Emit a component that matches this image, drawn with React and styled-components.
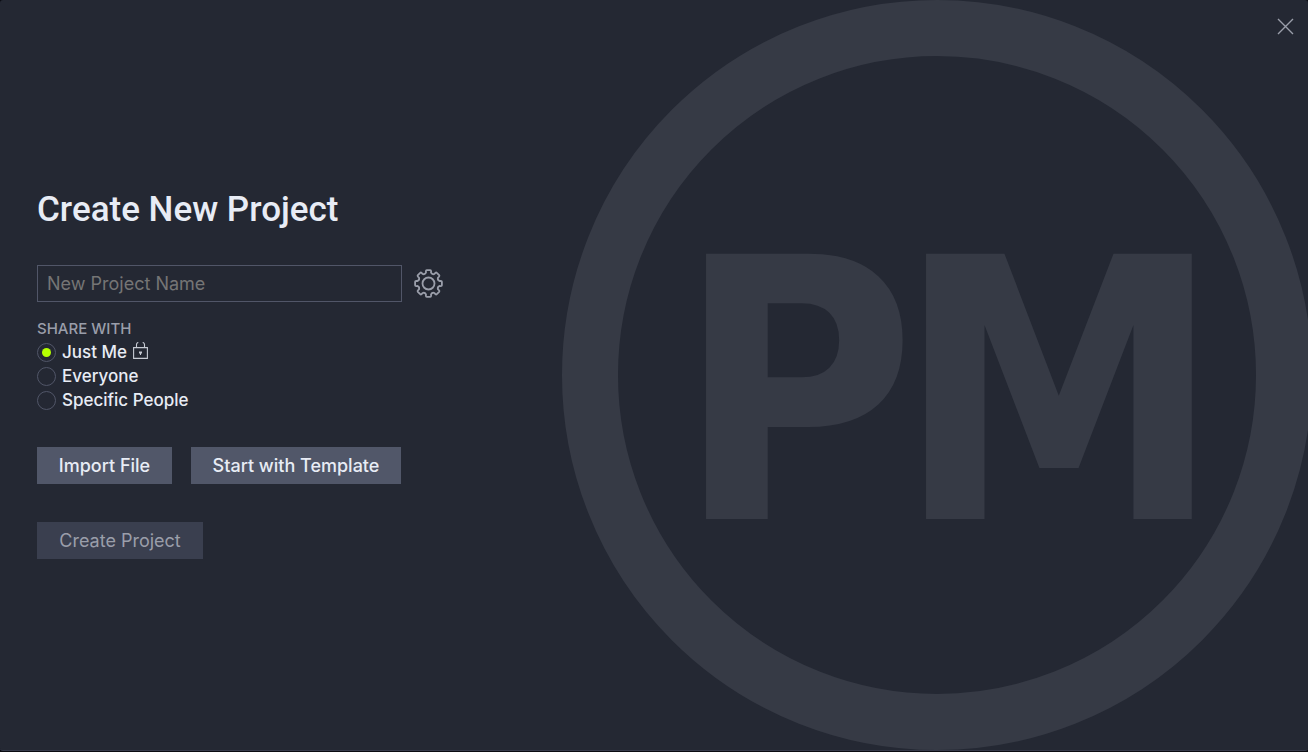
import React, { useState } from "react";
import styled, { createGlobalStyle } from "styled-components";

const GlobalStyle = createGlobalStyle`
  *, *::before, *::after { box-sizing: border-box; }
  body {
    margin: 0;
    background: #0b0c12;
    font-family: Inter, "Liberation Sans", sans-serif;
    color: #e8ecf5;
  }
  button, input { font: inherit; color: inherit; }
`;

const Dialog = styled.main`
  position: relative;
  display: flex;
  align-items: center;
  min-height: calc(100vh - 1px);
  padding: 36px;
  padding-left: 37px;
  overflow: hidden;
  background: #242833;
  border-bottom: 1px solid #363b4b;
  border-radius: 3px;
`;

const Emblem = styled.svg`
  position: absolute;
  top: 0;
  right: -4px;
  height: 100%;
  fill: #363a45;
  font-family: "DejaVu Sans Condensed", "DejaVu Sans", sans-serif;
  font-size: 364px;
  font-weight: 700;
`;

const IconButton = styled.button`
  display: flex;
  padding: 0;
  border: 0;
  background: none;
  color: #9a9eaa;
  cursor: pointer;
`;

const CloseButton = styled(IconButton)`
  position: absolute;
  top: 18px;
  right: 14px;
`;

const Form = styled.form`
  position: relative;
  display: flex;
  flex-direction: column;
`;

const Title = styled.h1`
  margin: 0 0 37px;
  font-family: Roboto, sans-serif;
  font-size: 35px;
  font-weight: 500;
  line-height: 37px;
`;

const NameRow = styled.div`
  display: flex;
  align-items: center;
  gap: 12px;
`;

const NameInput = styled.input`
  width: 365px;
  height: 37px;
  padding: 0 9px;
  border: 1px solid #515668;
  border-radius: 0;
  background: transparent;
  font-size: 18px;
  outline: none;
  &::placeholder { color: #757575; opacity: 1; }
`;

const ShareGroup = styled.fieldset`
  display: flex;
  flex-direction: column;
  margin: 17px 0 35px;
  padding: 0;
  border: 0;
`;

const ShareLegend = styled.legend`
  margin-bottom: 1px;
  padding: 0;
  color: #9a9eaa;
  font-size: 15px;
  font-weight: 500;
  line-height: 20px;
`;

const Option = styled.label`
  display: flex;
  align-items: center;
  gap: 6px;
  height: 24px;
  font-size: 17px;
  font-weight: 500;
  line-height: 24px;
`;

const Radio = styled.input`
  appearance: none;
  display: grid;
  place-items: center;
  width: 19px;
  height: 19px;
  margin: 0;
  border: 1px solid #515668;
  border-radius: 50%;
  &:checked::before {
    content: "";
    width: 9px;
    height: 9px;
    border-radius: 50%;
    background: #b4ff00;
  }
`;

const ButtonRow = styled.div`
  display: flex;
  gap: 19px;
  margin-bottom: 38px;
`;

const Button = styled.button`
  width: ${(p) => p.$width}px;
  height: 37px;
  padding: 0;
  border: 0;
  background: #515769;
  font-size: 18px;
  font-weight: 500;
  line-height: 24px;
  &:disabled {
    background: #3a3f4f;
    color: #9a9eaa;
    font-weight: 400;
  }
`;

const gearPath = () => {
  const at = (r, deg) => {
    const a = (deg * Math.PI) / 180;
    return `${(14.5 + r * Math.sin(a)).toFixed(2)} ${(14.5 - r * Math.cos(a)).toFixed(2)}`;
  };
  let d = "";
  for (let i = 0; i < 8; i++) {
    const c = i * 45;
    d += `${i ? "L" : "M"}${at(11.2, c - 13)}L${at(12.6, c - 12)}Q${at(13.6, c - 11)} ${at(13.5, c - 7)}`;
    d += `L${at(13.5, c + 7)}Q${at(13.6, c + 11)} ${at(12.6, c + 12)}L${at(11.2, c + 13)}`;
    d += `Q${at(9.4, c + 22.5)} ${at(11.2, c + 32)}`;
  }
  return d + "Z";
};

const GearIcon = () => (
  <svg width="29" height="29" viewBox="0 0 29 29" fill="none" stroke="currentColor" strokeWidth="1.8" strokeLinejoin="round" aria-hidden="true">
    <path d={gearPath()} />
    <circle cx="14.5" cy="14.5" r="6" />
  </svg>
);

const LockIcon = () => (
  <svg width="15" height="20" viewBox="0 0 15 20" fill="none" stroke="#c6cad3" strokeWidth="1.1" aria-hidden="true">
    <path d="M.6 5.6h13.8v10.8H.6zM3.5 5.5V2.4q0-1.6 1.8-2M11.5 5.5V2.4q0-1.6-1.8-2" />
    <path d="M6 9.5h3v1.4l-1 1V13H7v-1.1l-1-1z" fill="#c6cad3" stroke="none" />
  </svg>
);

const CloseIcon = () => (
  <svg width="17" height="17" viewBox="0 0 17 17" stroke="currentColor" strokeWidth="1.4" aria-hidden="true">
    <path d="M1 1l15 15M16 1L1 16" />
  </svg>
);

const options = [
  { id: "me", label: "Just Me", locked: true },
  { id: "everyone", label: "Everyone" },
  { id: "specific", label: "Specific People" },
];

export default function App() {
  const [share, setShare] = useState("me");
  const [name, setName] = useState("");
  return (
    <>
      <GlobalStyle />
      <Dialog>
        <Emblem viewBox="0 0 750 750" aria-hidden="true">
          <circle cx="375" cy="375" r="347" fill="none" stroke="#363a45" strokeWidth="56" />
          <text x="114 334" y="519">PM</text>
        </Emblem>
        <Form onSubmit={(e) => e.preventDefault()}>
          <Title>Create New Project</Title>
          <NameRow>
            <NameInput
              aria-label="New Project Name"
              placeholder="New Project Name"
              value={name}
              onChange={(e) => setName(e.target.value)}
            />
            <IconButton type="button" aria-label="Project settings"><GearIcon /></IconButton>
          </NameRow>
          <ShareGroup>
            <ShareLegend>SHARE WITH</ShareLegend>
            {options.map((o) => (
              <Option key={o.id}>
                <Radio type="radio" name="share" checked={share === o.id} onChange={() => setShare(o.id)} />
                {o.label}
                {o.locked && <LockIcon />}
              </Option>
            ))}
          </ShareGroup>
          <ButtonRow>
            <Button type="button" $width={135}>Import File</Button>
            <Button type="button" $width={210}>Start with Template</Button>
          </ButtonRow>
          <Button type="submit" $width={166} disabled={!name}>Create Project</Button>
        </Form>
        <CloseButton type="button" aria-label="Close"><CloseIcon /></CloseButton>
      </Dialog>
    </>
  );
}
